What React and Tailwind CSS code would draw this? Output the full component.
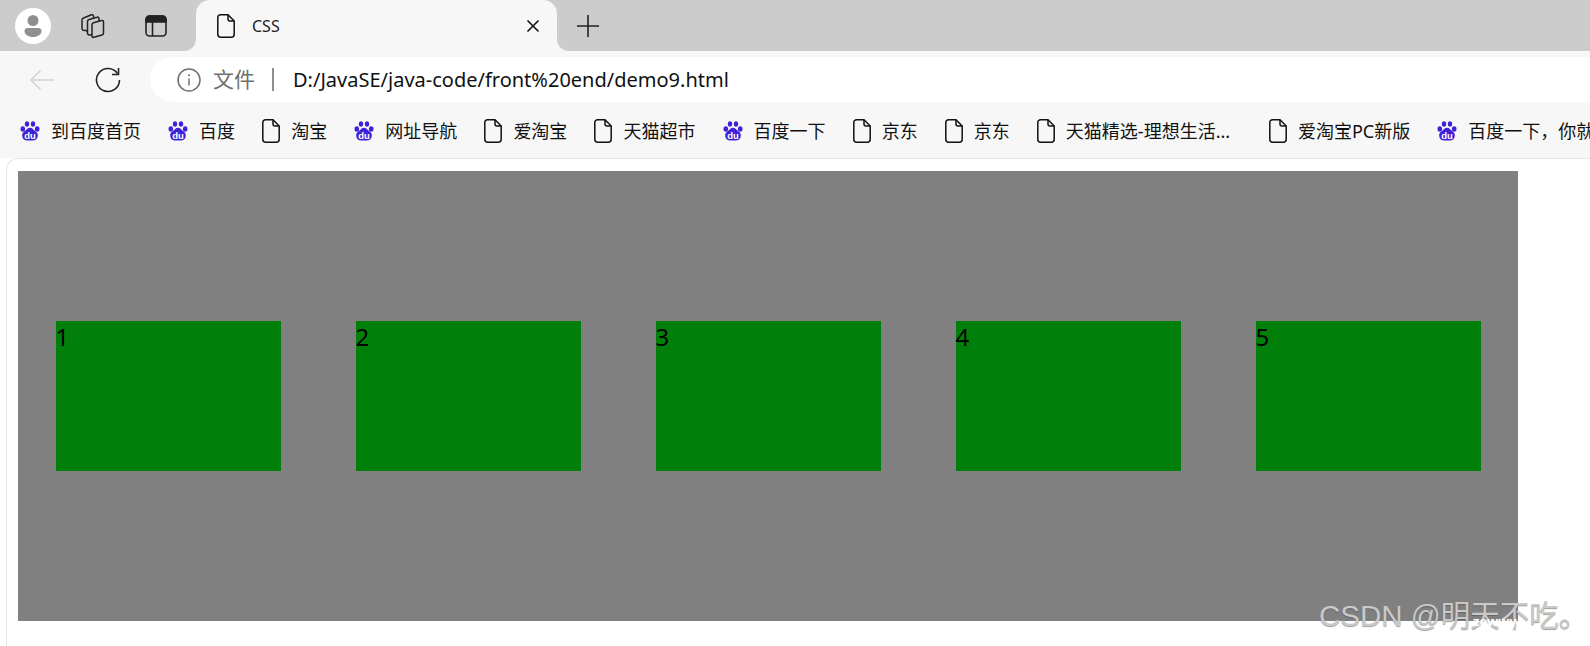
import React from 'react';

const FONT = '"Noto Sans", "Noto Sans CJK SC", sans-serif';

const bookmarks = [
    { type: 'baidu', label: '到百度首页' },
    { type: 'baidu', label: '百度' },
    { type: 'file', label: '淘宝' },
    { type: 'baidu', label: '网址导航' },
    { type: 'file', label: '爱淘宝' },
    { type: 'file', label: '天猫超市' },
    { type: 'baidu', label: '百度一下' },
    { type: 'file', label: '京东' },
    { type: 'file', label: '京东' },
    { type: 'file', label: '天猫精选-理想生活...', wide: true },
    { type: 'file', label: '爱淘宝PC新版' },
    { type: 'baidu', label: '百度一下，你就知道' },
];

const FileIcon = ({ className }) => (
    <svg viewBox="0 0 18 24" className={className} fill="none" stroke="#111" strokeWidth="1.5" strokeLinejoin="round">
        <path d="M3.5 .8H11L17.2 7V20.2a3 3 0 0 1-3 3H3.8a3 3 0 0 1-3-3V3.500a2.700 2.700 0 0 1 2.700-2.700Z" />
        <path d="M11 .8V5a2 2 0 0 0 2 2h4.200" />
    </svg>
);

const BaiduIcon = () => (
    <svg viewBox="0 0 20 20" className="h-5 w-5 shrink-0" fill="#3f22d6">
        <ellipse cx="2.800" cy="8" rx="2.300" ry="2.700" />
        <ellipse cx="7" cy="3" rx="2.200" ry="2.800" />
        <ellipse cx="13" cy="3" rx="2.200" ry="2.800" />
        <ellipse cx="17.200" cy="8" rx="2.300" ry="2.700" />
        <path d="M10 6.800c2.300 0 3 1.800 4.800 3 2.300 1.500 3.200 3 3 5.200-.3 3-2.500 4.500-5 4.500h-5.600c-2.500 0-4.700-1.500-5-4.500-.2-2.200.7-3.700 3-5.200 1.800-1.200 2.500-3 4.800-3Z" />
        <text x="10" y="17.800" textAnchor="middle" fontSize="9.500" fontWeight="700" fill="#fff" fontFamily="Liberation Sans, sans-serif">du</text>
    </svg>
);

const Box = ({ n }) => (
    <div className="h-[150px] w-[225px] bg-[#00800a] text-[24px] leading-[31px] text-black">{n}</div>
);

const App = () => {
    return (
        <div className="relative h-[646px] w-[1590px] overflow-hidden bg-white" style={{ fontFamily: FONT }}>
            {/* tab strip */}
            <div className="flex h-[51px] items-center bg-[#cccccc]">
                <div className="ml-[15px] flex h-9 w-9 items-center justify-center rounded-full bg-white">
                    <svg viewBox="0 0 36 36" className="h-9 w-9" fill="#8f8f8f">
                        <circle cx="18" cy="12.500" r="5.500" />
                        <path d="M9.500 23c0-2 1.500-3 3-3h11c1.500 0 3 1 3 3 0 3.500-3.800 6-8.500 6s-8.500-2.500-8.500-6Z" />
                    </svg>
                </div>
                <svg viewBox="0 0 26 26" className="ml-[29px] h-[26px] w-[26px]" fill="none" stroke="#222" strokeWidth="1.500" strokeLinejoin="round">
                    <path d="M13 24.500l9-2.500a2 2 0 0 0 1.500-2V9a1.500 1.500 0 0 0-2-1.500l-8 2.300A2 2 0 0 0 12 11.700V23.300a1 1 0 0 0 1 1.200Z" />
                    <path d="M12 21.500l-2 .5a2 2 0 0 1-2.500-1.800V8.500a2 2 0 0 1 1.500-2l8-2.300a1.500 1.500 0 0 1 2 1.500V8" />
                    <path d="M7.500 18.500L5 17.200a2 2 0 0 1-3-1.800V7a2 2 0 0 1 1.500-2l8-3.200a1.500 1.500 0 0 1 2 1.200V4.800" />
                </svg>
                <svg viewBox="0 0 22 22" className="ml-[39px] h-[22px] w-[22px]" fill="none" stroke="#222" strokeWidth="1.600">
                    <rect x="1" y="1" width="20" height="20" rx="3.500" />
                    <path d="M1 4.500a3.500 3.500 0 0 1 3.500-3.500h13a3.500 3.500 0 0 1 3.500 3.500V7H1Z" fill="#222" />
                    <path d="M7.500 7v14" />
                </svg>
                {/* active tab */}
                <div className="relative ml-[29px] flex h-[51px] w-[361px] items-center self-end rounded-t-[14px] bg-[#f7f7f7]">
                    <div className="absolute bottom-0 left-[-12px] h-3 w-3 bg-[#f7f7f7]">
                        <div className="h-3 w-3 rounded-br-[12px] bg-[#cccccc]" />
                    </div>
                    <div className="absolute bottom-0 right-[-12px] h-3 w-3 bg-[#f7f7f7]">
                        <div className="h-3 w-3 rounded-bl-[12px] bg-[#cccccc]" />
                    </div>
                    <FileIcon className="ml-[21px] h-6 w-[18px]" />
                    <span className="ml-[17px] text-[16px] text-[#222]">CSS</span>
                    <svg viewBox="0 0 14 14" className="ml-auto mr-[17px] h-[14px] w-[14px]" stroke="#111" strokeWidth="1.600">
                        <path d="M1.500 1.500l11 11M12.500 1.500l-11 11" />
                    </svg>
                </div>
                <svg viewBox="0 0 22 22" className="ml-[20px] h-[22px] w-[22px]" stroke="#222" strokeWidth="1.600">
                    <path d="M11 0v22M0 11h22" />
                </svg>
            </div>

            {/* address row */}
            <div className="flex h-[51px] items-center bg-[#f7f7f7] pt-[6px]">
                <svg viewBox="0 0 26 22" className="ml-[29px] h-[22px] w-[26px]" fill="none" stroke="#d4d4d4" strokeWidth="1.600">
                    <path d="M25 11H2M11.500 1.500L2 11l9.500 9.500" />
                </svg>
                <svg viewBox="0 0 26 26" className="ml-[40px] h-[26px] w-[26px]" fill="none" stroke="#222" strokeWidth="1.600">
                    <path d="M22.500 6.500A11.500 11.500 0 1 0 24.500 13" />
                    <path d="M23.500 1v6.500H17" />
                </svg>
                <div className="ml-[29px] flex h-[45px] flex-1 items-center rounded-l-full bg-white">
                    <svg viewBox="0 0 24 24" className="ml-[27px] h-6 w-6" fill="none" stroke="#707070" strokeWidth="1.500">
                        <circle cx="12" cy="12" r="11" />
                        <path d="M12 10.500v7" />
                        <circle cx="12" cy="7.300" r="1" fill="#707070" stroke="none" />
                    </svg>
                    <span className="ml-3 text-[21px] text-[#707070]">文件</span>
                    <div className="ml-[17px] h-[23px] w-[2px] bg-[#8f8f8f]" />
                    <span className="ml-[19px] text-[20px] text-[#111]">D:/JavaSE/java-code/front%20end/demo9.html</span>
                </div>
            </div>

            {/* bookmarks */}
            <div className="flex h-[56px] items-center gap-[27.1px] overflow-hidden whitespace-nowrap bg-[#f7f7f7] pl-[20px] pt-[2px]">
                {bookmarks.map((b, i) => (
                    <div key={i} className={`flex shrink-0 items-center gap-[11px] ${b.wide ? 'w-[205px]' : ''}`}>
                        {b.type === 'baidu' ? <BaiduIcon /> : <FileIcon className="h-6 w-[18px] shrink-0" />}
                        <span className="text-[18px] text-[#111]">{b.label}</span>
                    </div>
                ))}
            </div>

            {/* page */}
            <div className="ml-[6px] h-[488px] rounded-tl-[12px] border-l border-t border-[#e6e6e6] bg-white pl-[11px] pt-3">
                <div className="flex h-[450px] w-[1500px] items-center justify-around bg-[#808080]">
                    {[1, 2, 3, 4, 5].map(n => <Box key={n} n={n} />)}
                </div>
            </div>

            {/* watermark */}
            <div className="absolute left-[1319px] top-[594px] text-[29.5px] text-[#c9c9c9] [text-shadow:0_1px_1px_rgba(80,80,80,.55)]" style={{ fontFamily: '"Liberation Sans", "Noto Sans CJK SC", sans-serif' }}>CSDN @明天不吃。</div>
            <div className="absolute left-[1473px] top-[612px] text-[13px] font-bold text-white">zewwy</div>
        </div>
    );
};

export default App;
